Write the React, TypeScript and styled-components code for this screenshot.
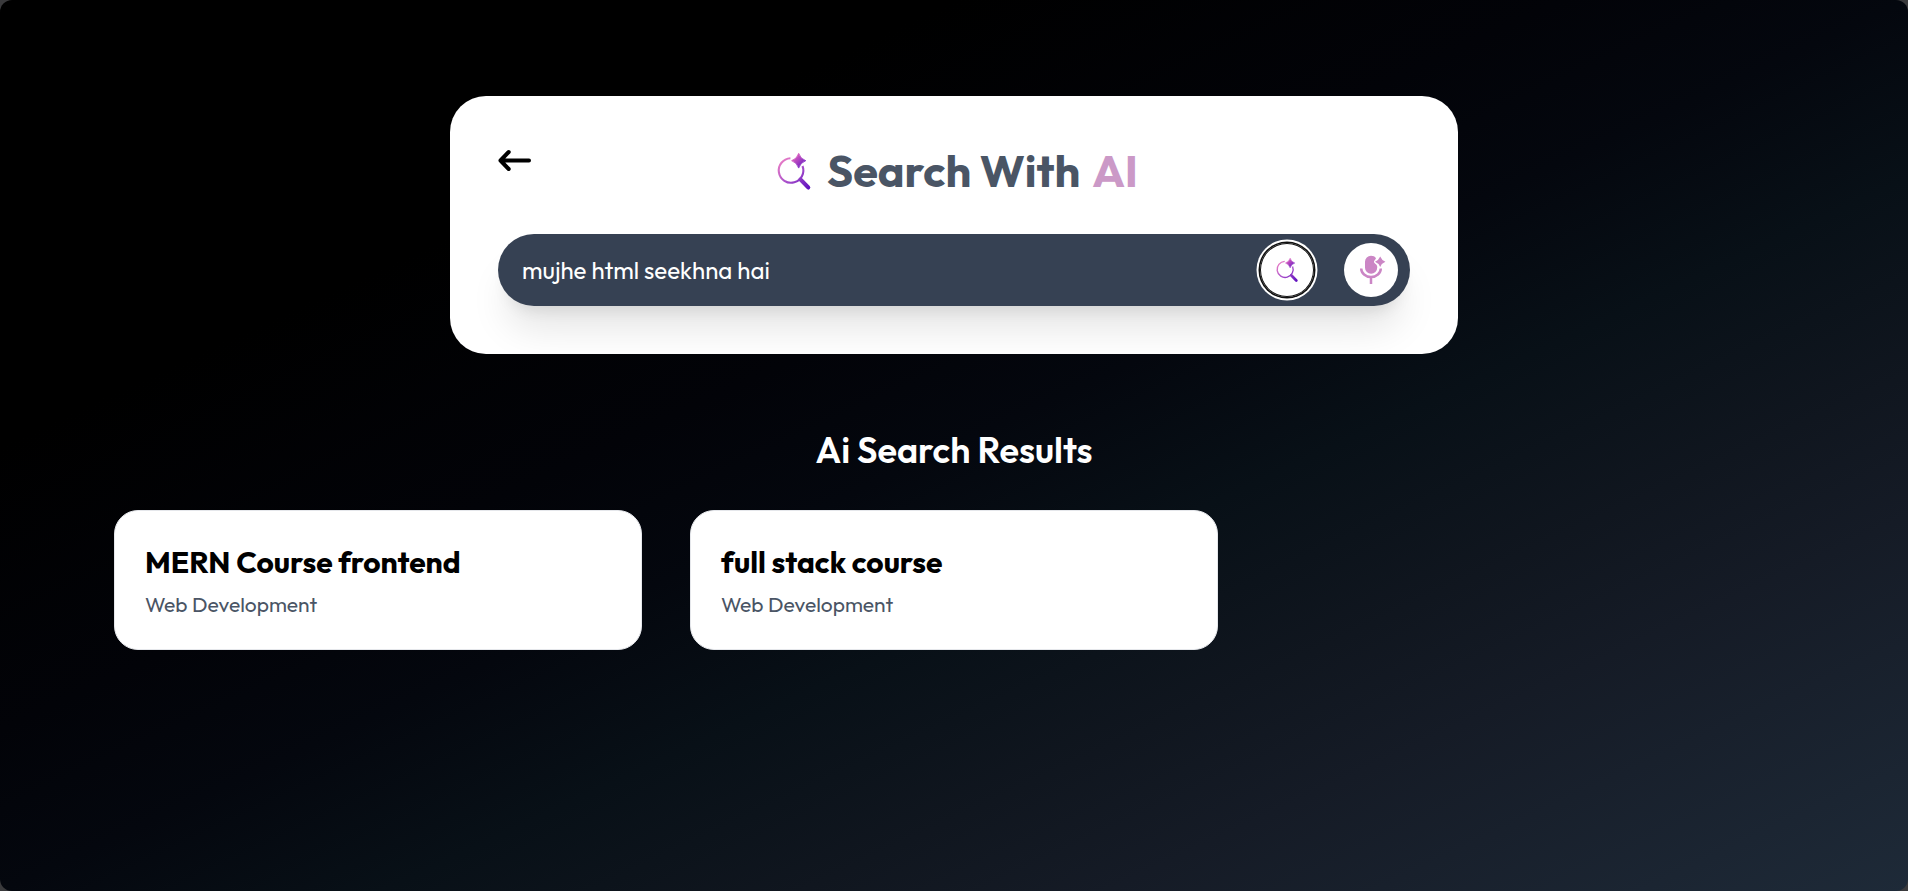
import React from 'react';
import styled, { createGlobalStyle } from 'styled-components';

const Global = createGlobalStyle`
  * { box-sizing: border-box; }
  html { background: #3a3a3c; }
  body { margin: 0; font-family: Outfit, Lato, sans-serif; }
  h1, h2, h3, p { margin: 0; }
  button, input { font: inherit; border: 0; padding: 0; }
`;

const Page = styled.main`
  height: 100vh;
  min-height: 891px;
  padding: 96px 24px;
  display: flex;
  flex-direction: column;
  align-items: center;
  overflow: hidden;
  border-radius: 12px;
  background: linear-gradient(to bottom right, #000 0%, #000 25%, #020308 41%, #04070e 50%, #081017 60%, #10161f 71%, #151b26 79%, #1e2a38 100%);
`;

const SearchCard = styled.section`
  width: 1008px;
  height: 258px;
  padding: 48px;
  display: grid;
  grid-template-columns: 36px 1fr 36px;
  grid-template-rows: 54px 72px;
  row-gap: 36px;
  border-radius: 36px;
  background: #fff;
  overflow: hidden;
`;

const BackButton = styled.button`
  width: 33px;
  height: 33px;
  background: none;
  display: flex;
  align-self: start;
`;

const Title = styled.h1`
  display: flex;
  align-items: center;
  justify-content: center;
  padding-left: 4px;
  color: #4a5565;
  font-size: 45px;
  font-weight: 700;
  line-height: 54px;
`;

const TitleText = styled.span`
  margin-left: 17px;
`;

const Accent = styled.span`
  color: #cb99c7;
  margin-left: 12px;
`;

const SearchBar = styled.div`
  grid-column: 1 / -1;
  display: flex;
  align-items: center;
  padding: 0 12px 0 24px;
  border-radius: 36px;
  background: #364153;
  box-shadow: 0 30px 37px -7px rgba(0, 0, 0, 0.1), 0 12px 15px -9px rgba(0, 0, 0, 0.1);
`;

const Query = styled.input`
  flex: 1;
  min-width: 0;
  background: none;
  outline: none;
  color: #fff;
  font-size: 24px;
`;

const RoundButton = styled.button<{ $focused?: boolean }>`
  width: 54px;
  height: 54px;
  margin-left: 30px;
  padding-right: ${(p) => (p.$focused ? '2px' : '0')};
  display: flex;
  align-items: center;
  justify-content: center;
  border-radius: 50%;
  background: #fff;
  box-shadow: ${(p) => (p.$focused ? 'inset 0 0 0 1px #101010, 0 0 0 1.5px #101010, 0 0 0 3.5px #fff' : 'none')};
`;

const ResultsTitle = styled.h2`
  margin-top: 72px;
  color: #fff;
  font-size: 36px;
  font-weight: 600;
  line-height: 48px;
`;

const Results = styled.div`
  width: 1680px;
  margin-top: 36px;
  display: grid;
  grid-template-columns: repeat(3, 528px);
  gap: 48px;
`;

const ResultCard = styled.article`
  height: 140px;
  padding: 30px;
  border-radius: 24px;
  border: 1px solid #e5e7eb;
  background: #fff;
`;

const CourseName = styled.h3`
  color: #000;
  font-size: 30px;
  font-weight: 700;
  line-height: 42px;
`;

const Category = styled.p`
  color: #4a5565;
  font-size: 21px;
  line-height: 30px;
  margin-top: 6px;
`;

const SearchAiIcon = ({ size, id }: { size: number; id: string }) => (
  <svg width={size} height={size} viewBox="0 0 36 36" fill="none" overflow="visible">
    <defs>
      <linearGradient id={id} x1="5" y1="5" x2="34" y2="36" gradientUnits="userSpaceOnUse">
        <stop offset="0" stopColor="#f283c4" />
        <stop offset="0.5" stopColor="#ac52cb" />
        <stop offset="1" stopColor="#6012bf" />
      </linearGradient>
      <linearGradient id={id + 'Star'} x1="19" y1="2" x2="30" y2="13" gradientUnits="userSpaceOnUse">
        <stop offset="0" stopColor="#ed67bc" />
        <stop offset="1" stopColor="#6a1dc4" />
      </linearGradient>
    </defs>
    <path d="M16.4 5.2A12.3 12.3 0 1 0 28.5 13" stroke={`url(#${id})`} strokeWidth="2.1" />
    <path d="M26.4 26.4 34.2 34.4" stroke={`url(#${id})`} strokeWidth="4.2" strokeLinecap="round" />
    <path d="M24.7.3Q26.5 6 31.8 7.7Q26.5 9.4 24.7 15.1Q22.9 9.4 17.6 7.7Q22.9 6 24.7.3Z" fill={`url(#${id}Star)`} stroke={`url(#${id}Star)`} strokeWidth=".8" />
  </svg>
);

const MicIcon = () => (
  <svg width="30" height="30" viewBox="0 0 30 30" fill="none">
    <path d="M20 3.2C18.8 1.5 17.2.8 15 .8a6 6 0 0 0-6 6v5.9a6.1 6.1 0 0 0 12.2 0V11.4C20.8 10 20.3 9.3 19.2 8.7C17.6 7.8 17.6 5.9 19 5.1Z" fill="#cb86c5" />
    <path d="M5.2 13.4a9.8 8.6 0 0 0 19.6 0M15 22v7" stroke="#cb86c5" strokeWidth="2.5" />
    <path d="M24.2 1.6Q25.7 5.4 29.4 6.8Q25.7 8.2 24.2 12Q22.7 8.2 19 6.8Q22.7 5.4 24.2 1.6Z" fill="#cb86c5" />
  </svg>
);

const courses = [
  { name: 'MERN Course frontend', category: 'Web Development' },
  { name: 'full stack course', category: 'Web Development' },
];

export default function App() {
  return (
    <>
      <Global />
      <Page>
        <SearchCard>
          <BackButton aria-label="Back">
            <svg width="33" height="33" viewBox="0 0 33 33" fill="none" stroke="#000" strokeWidth="4" strokeLinecap="round" strokeLinejoin="round">
              <path d="M31 16.5H2.5M10.7 8 2.5 16.5l8.2 8.5" />
            </svg>
          </BackButton>
          <Title>
            <SearchAiIcon size={36} id="titleSearch" />
            <TitleText>Search With</TitleText>
            <Accent>AI</Accent>
          </Title>
          <SearchBar>
            <Query defaultValue="mujhe html seekhna hai" spellCheck={false} />
            <RoundButton $focused aria-label="Search">
              <SearchAiIcon size={23.5} id="buttonSearch" />
            </RoundButton>
            <RoundButton aria-label="Speak">
              <MicIcon />
            </RoundButton>
          </SearchBar>
        </SearchCard>
        <ResultsTitle>Ai Search Results</ResultsTitle>
        <Results>
          {courses.map((c) => (
            <ResultCard key={c.name}>
              <CourseName>{c.name}</CourseName>
              <Category>{c.category}</Category>
            </ResultCard>
          ))}
        </Results>
      </Page>
    </>
  );
}
